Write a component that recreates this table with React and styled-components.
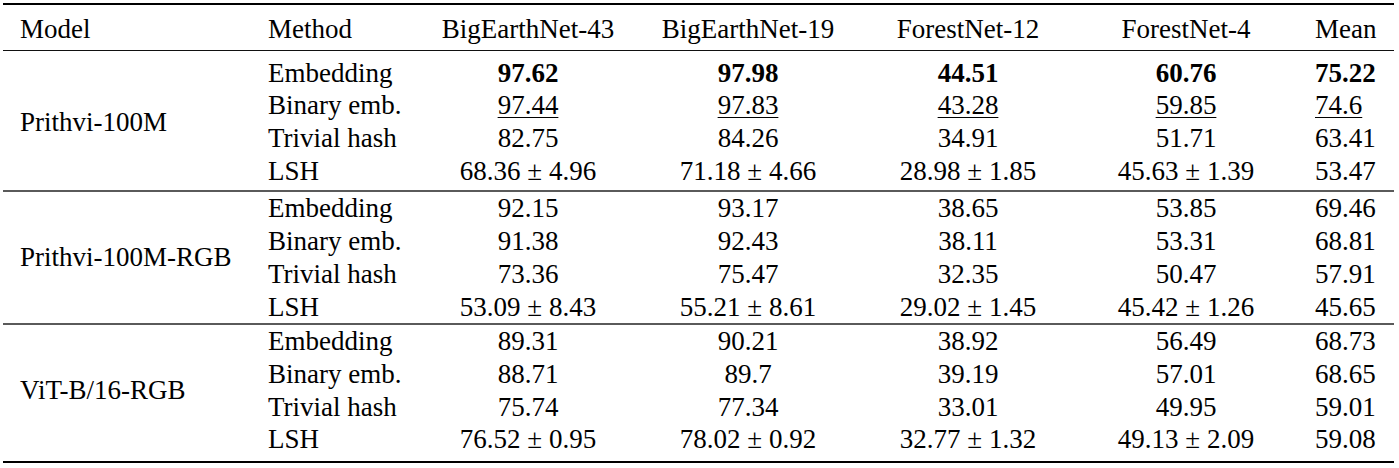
import React from "react";
import styled, { createGlobalStyle, css } from "styled-components";

const Global = createGlobalStyle`
  html, body { margin: 0; padding: 0; background: #fff; }
  body { font-family: "Liberation Serif", "Times New Roman", serif; color: #000; }
`;

const COLS = "249px 166px 220px 220px 220px 216px 100px";

const Table = styled.div`
  width: 1391px;
  margin: 3px 0 0 3px;
  border-top: 2px solid #000;
  border-bottom: 2px solid #000;
  font-size: 27px;
  line-height: 32.7px;
`;

const HeadRow = styled.div`
  display: grid;
  grid-template-columns: ${COLS};
  padding: 8px 0 4px;
  border-bottom: 1px solid #111;
`;

const Group = styled.div`
  display: grid;
  grid-template-columns: ${COLS};
  grid-auto-rows: 32.7px;
  padding: ${(p) => p.$pad};
  border-top: ${(p) => (p.$divider ? "2px solid #5a5a5a" : "none")};
`;

const cellBase = css`
  white-space: nowrap;
`;

const ModelCell = styled.div`
  ${cellBase};
  grid-column: 1;
  grid-row: 1 / span 4;
  align-self: center;
  padding-left: 17px;
`;

const LeftCell = styled.div`
  ${cellBase};
  padding-left: ${(p) => p.$pad || "17px"};
  text-align: left;
`;

const NumCell = styled.div`
  ${cellBase};
  text-align: center;
`;

const MeanCell = styled.div`
  ${cellBase};
  padding-left: 21px;
  text-align: left;
`;

const Val = styled.span`
  font-weight: ${(p) => (p.$best ? 700 : 400)};
  text-decoration: ${(p) => (p.$second ? "underline" : "none")};
  text-decoration-thickness: 1px;
  text-underline-offset: 3px;
`;

const groups = [
  {
    model: "Prithvi-100M",
    pad: "6px 0 3px",
    rows: [
      ["Embedding", ["97.62", "97.98", "44.51", "60.76", "75.22"], "best"],
      ["Binary emb.", ["97.44", "97.83", "43.28", "59.85", "74.6"], "second"],
      ["Trivial hash", ["82.75", "84.26", "34.91", "51.71", "63.41"]],
      ["LSH", ["68.36 ± 4.96", "71.18 ± 4.66", "28.98 ± 1.85", "45.63 ± 1.39", "53.47"]],
    ],
  },
  {
    model: "Prithvi-100M-RGB",
    pad: "0 0 0",
    divider: true,
    rows: [
      ["Embedding", ["92.15", "93.17", "38.65", "53.85", "69.46"]],
      ["Binary emb.", ["91.38", "92.43", "38.11", "53.31", "68.81"]],
      ["Trivial hash", ["73.36", "75.47", "32.35", "50.47", "57.91"]],
      ["LSH", ["53.09 ± 8.43", "55.21 ± 8.61", "29.02 ± 1.45", "45.42 ± 1.26", "45.65"]],
    ],
  },
  {
    model: "ViT-B/16-RGB",
    pad: "0 0 5px",
    divider: true,
    rows: [
      ["Embedding", ["89.31", "90.21", "38.92", "56.49", "68.73"]],
      ["Binary emb.", ["88.71", "89.7", "39.19", "57.01", "68.65"]],
      ["Trivial hash", ["75.74", "77.34", "33.01", "49.95", "59.01"]],
      ["LSH", ["76.52 ± 0.95", "78.02 ± 0.92", "32.77 ± 1.32", "49.13 ± 2.09", "59.08"]],
    ],
  },
];

const headers = ["BigEarthNet-43", "BigEarthNet-19", "ForestNet-12", "ForestNet-4"];

export default function App() {
  return (
    <>
      <Global />
      <Table>
        <HeadRow>
          <LeftCell>Model</LeftCell>
          <LeftCell $pad="16px">Method</LeftCell>
          {headers.map((h) => (
            <NumCell key={h}>{h}</NumCell>
          ))}
          <MeanCell>Mean</MeanCell>
        </HeadRow>
        {groups.map((g) => (
          <Group key={g.model} $pad={g.pad} $divider={g.divider}>
            <ModelCell>{g.model}</ModelCell>
            {g.rows.map(([method, vals, mark]) => (
              <React.Fragment key={method}>
                <LeftCell $pad="16px">{method}</LeftCell>
                {vals.slice(0, 4).map((v, i) => (
                  <NumCell key={i}>
                    <Val $best={mark === "best"} $second={mark === "second"}>
                      {v}
                    </Val>
                  </NumCell>
                ))}
                <MeanCell>
                  <Val $best={mark === "best"} $second={mark === "second"}>
                    {vals[4]}
                  </Val>
                </MeanCell>
              </React.Fragment>
            ))}
          </Group>
        ))}
      </Table>
    </>
  );
}
